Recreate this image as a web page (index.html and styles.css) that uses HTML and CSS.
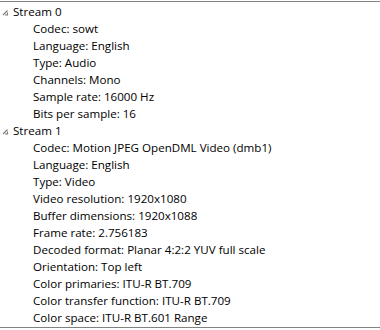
FILE: index.html
```html
<!DOCTYPE html>
<html lang="en">
<head>
    <meta charset="UTF-8">
    <title>Stream info</title>
    <link rel="stylesheet" href="styles.css">
</head>
<body>
    <div class="tree">
        <div class="node">
            <div class="row head">
                <svg class="chev" width="7" height="7" viewBox="0 0 7 7"><path d="M1 6 L5.5 1.5 M3 6 L5.5 6 L5.5 3.5" fill="none" stroke="#7a7a7a" stroke-width="1.1"/></svg>
                <span>Stream 0</span>
            </div>
            <div class="row item">Codec: sowt</div>
            <div class="row item">Language: English</div>
            <div class="row item">Type: Audio</div>
            <div class="row item">Channels: Mono</div>
            <div class="row item">Sample rate: 16000 Hz</div>
            <div class="row item">Bits per sample: 16</div>
        </div>
        <div class="node">
            <div class="row head">
                <svg class="chev" width="7" height="7" viewBox="0 0 7 7"><path d="M1 6 L5.5 1.5 M3 6 L5.5 6 L5.5 3.5" fill="none" stroke="#7a7a7a" stroke-width="1.1"/></svg>
                <span>Stream 1</span>
            </div>
            <div class="row item">Codec: Motion JPEG OpenDML Video (dmb1)</div>
            <div class="row item">Language: English</div>
            <div class="row item">Type: Video</div>
            <div class="row item">Video resolution: 1920x1080</div>
            <div class="row item">Buffer dimensions: 1920x1088</div>
            <div class="row item">Frame rate: 2.756183</div>
            <div class="row item">Decoded format: Planar 4:2:2 YUV full scale</div>
            <div class="row item">Orientation: Top left</div>
            <div class="row item">Color primaries: ITU-R BT.709</div>
            <div class="row item">Color transfer function: ITU-R BT.709</div>
            <div class="row item">Color space: ITU-R BT.601 Range</div>
        </div>
    </div>
</body>
</html>
```

FILE: styles.css
```css
html, body {
    margin: 0;
    padding: 0;
    background: #fff;
}
body {
    font-family: "Open Sans", "Noto Sans", sans-serif;
    font-size: 11.6px;
    color: #000;
    width: 380px;
    height: 330px;
    overflow: hidden;
}
.tree {
    margin-top: 1px;
    border-top: 1px solid #828282;
    border-bottom: 1px solid #828282;
    padding: 1px 0 8px;
    height: 316px;
}
.row {
    height: 17px;
    line-height: 17px;
    white-space: nowrap;
}
.head {
    display: flex;
    align-items: center;
    padding-left: 2px;
}
.chev {
    margin-right: 4px;
    margin-top: 1px;
}
.item {
    padding-left: 33px;
}
```
